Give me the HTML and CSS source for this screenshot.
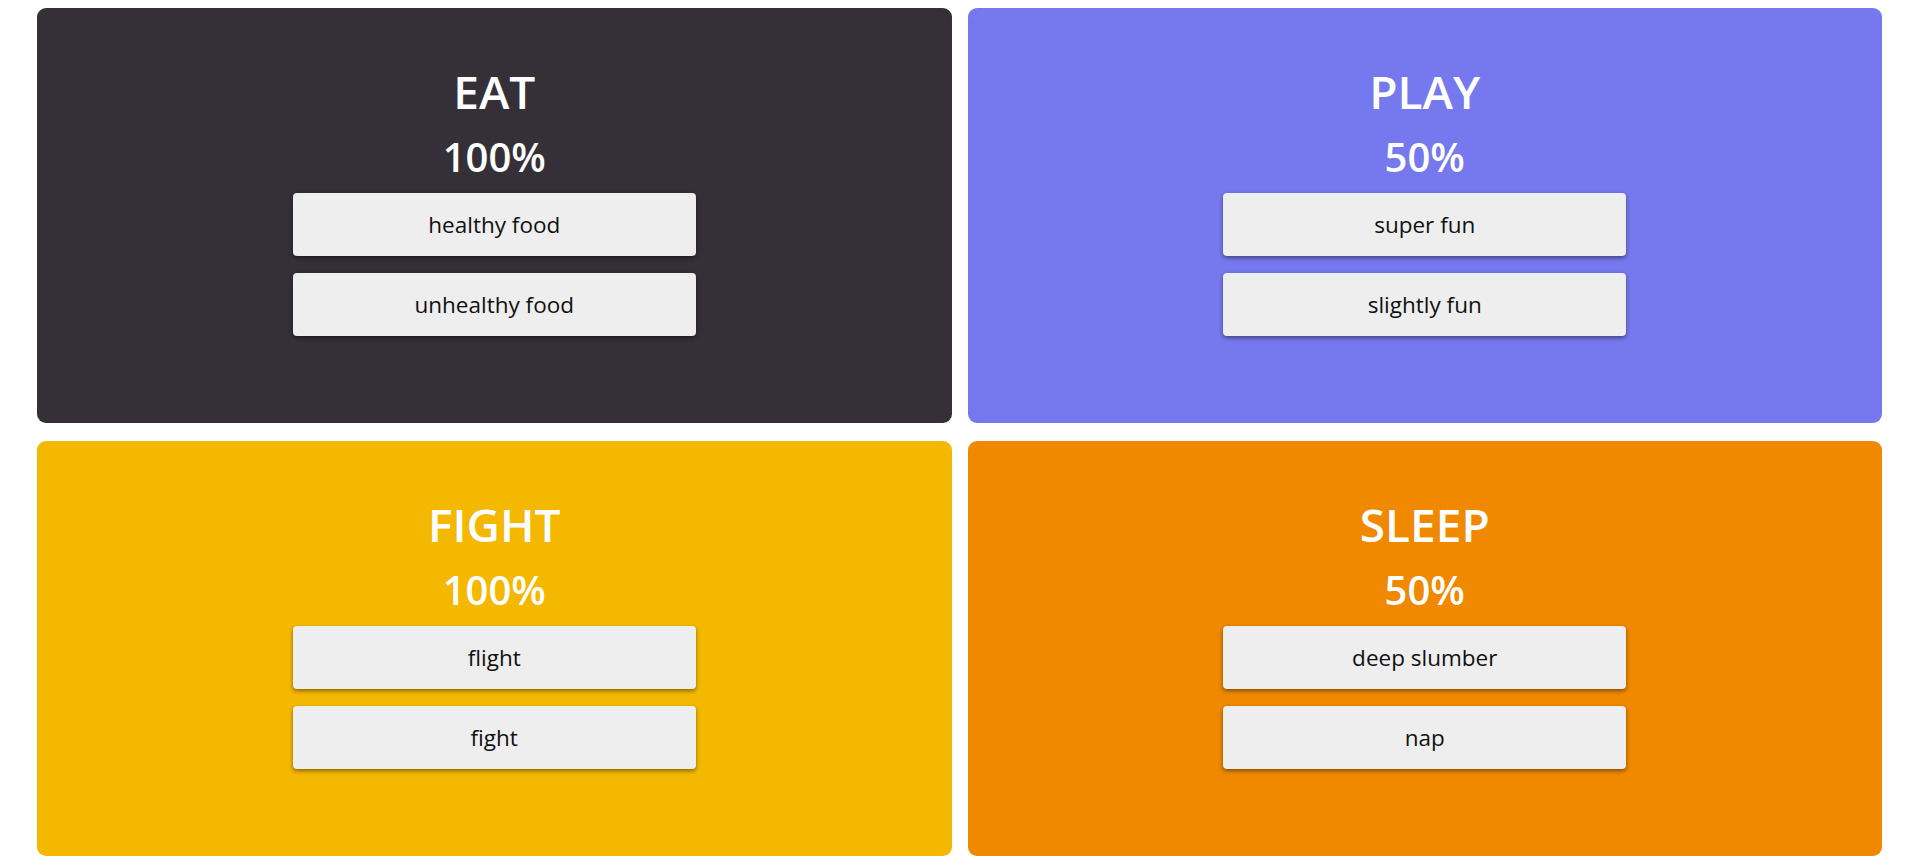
FILE: index.html
```html
<!DOCTYPE html>
<html lang="en">
<head>
<meta charset="utf-8">
<title>Needs</title>
<link rel="stylesheet" href="styles.css">
</head>
<body>
<main class="grid">
  <section class="card card-eat">
    <h2 class="title">EAT</h2>
    <div class="percent">100%</div>
    <div class="actions">
      <button class="btn">healthy food</button>
      <button class="btn">unhealthy food</button>
    </div>
  </section>
  <section class="card card-play">
    <h2 class="title">PLAY</h2>
    <div class="percent">50%</div>
    <div class="actions">
      <button class="btn">super fun</button>
      <button class="btn">slightly fun</button>
    </div>
  </section>
  <section class="card card-fight">
    <h2 class="title">FIGHT</h2>
    <div class="percent">100%</div>
    <div class="actions">
      <button class="btn">flight</button>
      <button class="btn">fight</button>
    </div>
  </section>
  <section class="card card-sleep">
    <h2 class="title">SLEEP</h2>
    <div class="percent">50%</div>
    <div class="actions">
      <button class="btn">deep slumber</button>
      <button class="btn">nap</button>
    </div>
  </section>
</main>
</body>
</html>
```
FILE: styles.css
```css
html, body {
  margin: 0;
  padding: 0;
  background: #ffffff;
}
body {
  font-family: "Open Sans", "Noto Sans", sans-serif;
}
.grid {
  display: grid;
  grid-template-columns: 1fr 1fr;
  grid-template-rows: 415px 415px;
  column-gap: 16px;
  row-gap: 18px;
  padding: 8px 38px 0 37px;
}
.card {
  border-radius: 9px;
  display: flex;
  flex-direction: column;
  align-items: center;
  padding-top: 55px;
  box-sizing: border-box;
  color: #ffffff;
}
.card-eat { background: #353038; }
.card-play { background: #7579ed; }
.card-fight { background: #f5b800; }
.card-sleep { background: #f08800; }
.title {
  margin: 0;
  font-size: 46px;
  line-height: 56px;
  font-weight: 600;
}
.percent {
  margin-top: 14px;
  font-size: 40px;
  line-height: 48px;
  font-weight: 600;
}
.actions {
  margin-top: 12px;
  display: flex;
  flex-direction: column;
  gap: 17px;
}
.btn {
  width: 403px;
  height: 63px;
  border: none;
  border-radius: 4px;
  background: #eeeeee;
  color: #111111;
  font-family: "Open Sans", "Noto Sans", sans-serif;
  font-size: 22.5px;
  box-shadow: 0 2px 4px rgba(0, 0, 0, 0.45);
  padding: 0;
  cursor: pointer;
}
```
